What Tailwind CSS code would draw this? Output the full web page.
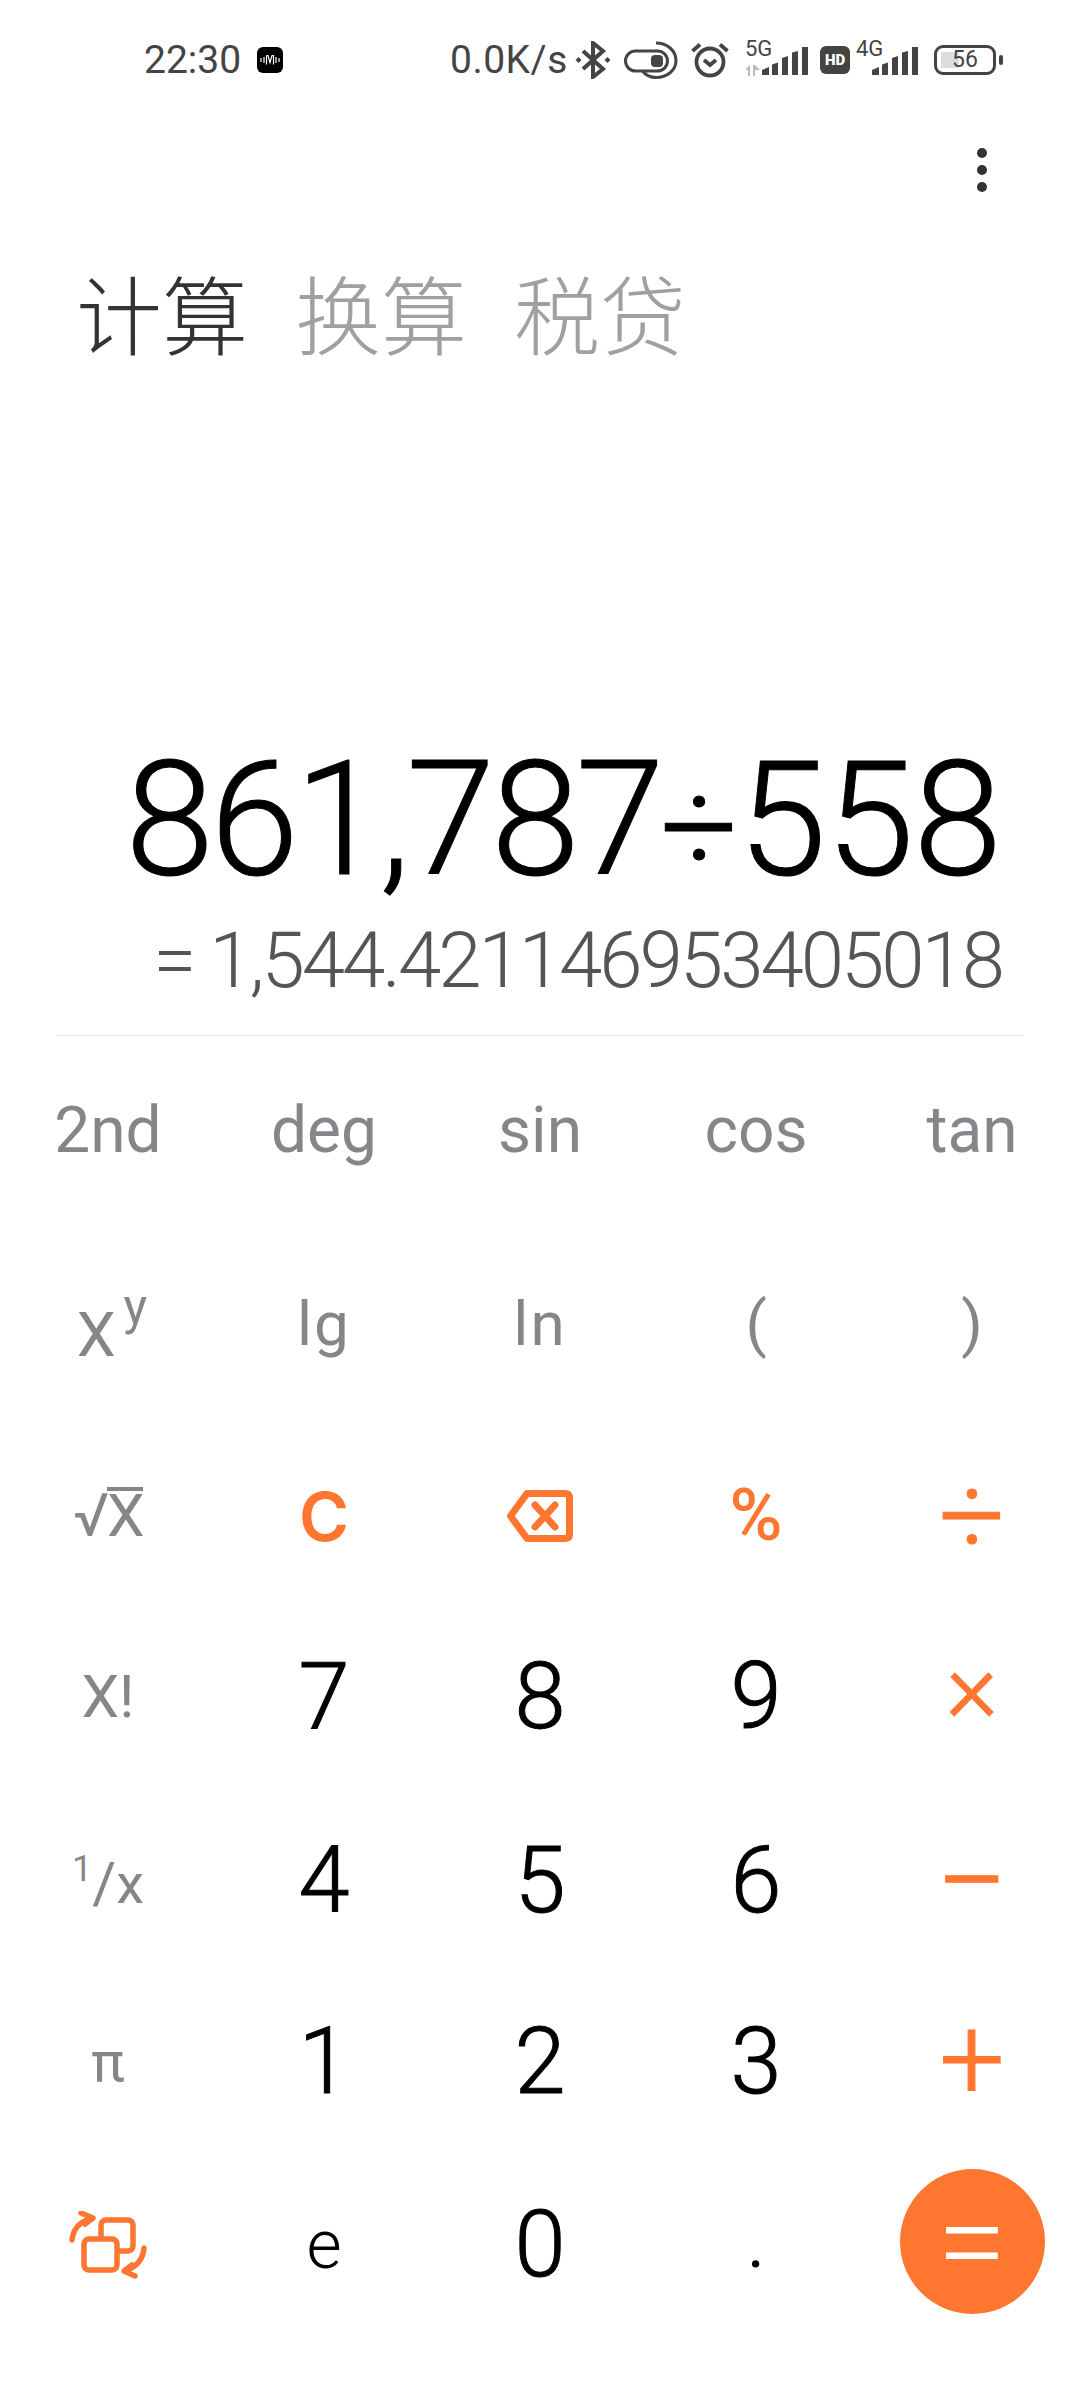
<!DOCTYPE html>
<html lang="zh-CN">
<head>
    <meta charset="UTF-8">
    <meta name="viewport" content="width=device-width, initial-scale=1.0">
    <title>计算器</title>
    <script src="https://cdn.jsdelivr.net/npm/@tailwindcss/browser@4"></script>
</head>
<body class="w-[1080px] h-[2400px] overflow-hidden bg-white font-['Roboto','Noto_Sans_CJK_SC',sans-serif]">
    <!-- status bar -->
    <div class="h-[120px] flex items-center pl-[144px] text-[#444444]">
        <span class="text-[39px] leading-none w-[113px]">22:30</span>
        <svg class="w-[26px] h-[26px]" viewBox="0 0 26 26">
            <rect width="26" height="26" rx="6" fill="#000"/>
            <path d="M4 11v4M7 10v6M9.500 8.500h1.500l2 7 2-7h1.500v9M9.500 8.500v9M19 10v6M22 11v4" stroke="#fff" stroke-width="1.200" fill="none"/>
        </svg>
        <span class="text-[39px] leading-none tracking-[0.5px] ml-[167px] w-[125px]">0.0K/s</span>
        <!-- bluetooth -->
        <svg class="w-[36px] h-[38px]" viewBox="0 0 36 38" fill="none" stroke="#444" stroke-width="4">
            <path d="M8 10l20 18-10 8V2l10 8L8 28"/>
            <path d="M3.500 16l3 3-3 3-3-3zM32.500 16l3 3-3 3-3-3z" fill="#444" stroke="none"/>
        </svg>
        <!-- toggle -->
        <svg class="w-[54px] h-[38px] ml-[13px]" viewBox="0 0 54 38" fill="none" stroke="#444" stroke-width="3">
            <rect x="1.500" y="10" width="42" height="20" rx="10"/>
            <rect x="27" y="14" width="12" height="12" rx="4" fill="#444" stroke="none"/>
            <path d="M32 2c11 0 20 7.500 20 17.500S43 36.500 32 36.500c-6 0-10-2-13-6"/>
        </svg>
        <!-- alarm -->
        <svg class="w-[38px] h-[36px] ml-[13px]" viewBox="0 0 38 36" fill="none" stroke="#444" stroke-width="3.800">
            <circle cx="19" cy="20" r="13.500"/>
            <path d="M13 18l6 5 6-5M1.500 9L9 2.500M36.500 9L29 2.500"/>
        </svg>
        <!-- 5G signal -->
        <div class="relative w-[63px] h-[38px] ml-[16px]">
            <span class="absolute left-0 top-[-4px] text-[22px] leading-[24px]">5G</span>
            <svg class="absolute left-0 top-[5px] w-[65px] h-[30px]" viewBox="0 0 65 30">
                <path d="M0 24l5-5v11H3v-6zM8 19h2l5 5h-5v6H8z" fill="#bbb"/>
                <path d="M18 24l7-3v8h-7zM28 18.500l6-2V29h-6zM38 12l6-2v19h-6zM48 6.500l6-1.500V29h-6zM58 1h6v28h-6z" fill="#444" transform="translate(-1 0)"/>
            </svg>
        </div>
        <!-- HD -->
        <div class="ml-[12px] w-[30px] h-[28px] rounded-[6px] bg-[#444444] text-white text-[15px] font-black leading-[28px] text-center">HD</div>
        <!-- 4G signal -->
        <div class="relative w-[64px] h-[38px] ml-[6px]">
            <span class="absolute left-0 top-[-4px] text-[22px] leading-[24px]">4G</span>
            <svg class="absolute left-[16px] top-[5px] w-[48px] h-[30px]" viewBox="0 0 48 30">
                <path d="M0 24l7-3v8H0zM10 18.500l6-2V29h-6zM20 12l6-2v19h-6zM30 6.500l6-1.500V29h-6zM40 1h6v28h-6z" fill="#444"/>
            </svg>
        </div>
        <!-- battery -->
        <div class="relative ml-[14px] w-[62px] h-[30px] rounded-[9px] border-[3px] border-[#444444]">
            <div class="absolute left-[4px] top-[4px] w-[18px] h-[16px] bg-[#dddddd]"></div>
            <span class="absolute inset-0 text-center text-[23px] leading-[24px]">56</span>
        </div>
        <div class="ml-[3px] w-[4px] h-[10px] rounded-[2px] bg-[#444444]"></div>
    </div>

    <!-- overflow menu -->
    <div class="h-[100px] flex justify-end pr-[93px] pt-[28px]">
        <div class="flex flex-col gap-[7px]">
            <div class="w-[10px] h-[10px] rounded-full bg-[#333333]"></div>
            <div class="w-[10px] h-[10px] rounded-full bg-[#333333]"></div>
            <div class="w-[10px] h-[10px] rounded-full bg-[#333333]"></div>
        </div>
    </div>

    <!-- tabs -->
    <div class="h-[184px] flex items-center pl-[76px] gap-[47px] text-[86px] leading-none font-light font-['Noto_Sans_CJK_SC',sans-serif]">
        <span class="text-[#333333]">计算</span>
        <span class="text-[#a0a0a0]">换算</span>
        <span class="text-[#a0a0a0]">税贷</span>
    </div>

    <!-- display -->
    <div class="h-[514px] flex items-end justify-end pr-[79px] text-[160px] leading-[180px] text-black font-light [-webkit-text-stroke:1px_black]"><span><span class="tracking-[-4px]">861,787</span><span class="text-[136px]">÷</span><span class="tracking-[-1px]">558</span></span></div>
    <div class="h-[103px] -mt-[9px] flex items-center justify-end pr-[78px] text-[78px] leading-none tracking-[-3px] text-[#555555] font-light">= 1,544.421146953405018</div>
    <div class="mx-[57px] mt-[23px] h-[1px] bg-[#e2e2e2]"></div>

    <!-- keypad -->
    <div class="grid grid-cols-5 grid-rows-[190px_196px_188px_174px_194px_168px_198px] text-center items-center leading-none">
        <div class="text-[64px] text-[#85868a]">2nd</div>
        <div class="text-[64px] text-[#85868a]">deg</div>
        <div class="text-[64px] text-[#85868a]">sin</div>
        <div class="text-[64px] text-[#85868a]">cos</div>
        <div class="text-[64px] text-[#85868a]">tan</div>

        <div class="text-[62px] text-[#85868a] pl-[8px]">X<span class="text-[50px] align-[32px] ml-[8px]">y</span></div>
        <div class="text-[62px] text-[#85868a] tracking-[2px]">lg</div>
        <div class="text-[62px] text-[#85868a] tracking-[2px]">ln</div>
        <div class="text-[62px] text-[#85868a]">(</div>
        <div class="text-[62px] text-[#85868a]">)</div>

        <div class="text-[60px] text-[#85868a] tracking-[-2px]">√<span class="inline-block h-[54px] leading-[50px] border-t-[4px] border-[#85868a]">X</span></div>
        <div class="text-[68px] font-semibold font-['Inter',sans-serif] text-[#ff7631]">C</div>
        <div class="flex justify-center">
            <svg class="w-[66px] h-[52px]" viewBox="0 0 66 52" fill="none" stroke="#ff7631" stroke-width="7" stroke-linejoin="round" stroke-linecap="round">
                <path d="M20 3.500h38q4.500 0 4.500 4.500v36q0 4.500-4.500 4.500H20L3.500 26z"/>
                <path d="M28 15l20 22M48 15L28 37"/>
            </svg>
        </div>
        <div class="text-[72px] font-medium text-[#ff7631]">%</div>
        <div class="text-[116px] font-light text-[#ff7631] [-webkit-text-stroke:1px_#ff7631]">÷</div>

        <div class="text-[60px] text-[#85868a]">X!</div>
        <div class="text-[92px] font-light text-black [-webkit-text-stroke:1px_black]">7</div>
        <div class="text-[92px] font-light text-black [-webkit-text-stroke:1px_black]">8</div>
        <div class="text-[92px] font-light text-black [-webkit-text-stroke:1px_black]">9</div>
        <div class="text-[100px] font-light text-[#ff7631] pb-[20px] [-webkit-text-stroke:1px_#ff7631]">×</div>

        <div class="text-[56px] text-[#85868a]"><span class="text-[36px] align-[22px]">1</span><span class="text-[58px]">/</span><span>x</span></div>
        <div class="text-[92px] font-light text-black [-webkit-text-stroke:1px_black]">4</div>
        <div class="text-[92px] font-light text-black [-webkit-text-stroke:1px_black]">5</div>
        <div class="text-[92px] font-light text-black [-webkit-text-stroke:1px_black]">6</div>
        <div class="text-[128px] font-light text-[#ff7631] [-webkit-text-stroke:1px_#ff7631]">−</div>

        <div class="text-[56px] text-[#85868a]">π</div>
        <div class="text-[92px] font-light text-black [-webkit-text-stroke:1px_black]">1</div>
        <div class="text-[92px] font-light text-black [-webkit-text-stroke:1px_black]">2</div>
        <div class="text-[92px] font-light text-black [-webkit-text-stroke:1px_black]">3</div>
        <div class="text-[116px] font-light text-[#ff7631] pb-[6px] [-webkit-text-stroke:1px_#ff7631]">+</div>

        <div class="flex justify-center">
            <svg class="w-[78px] h-[68px]" viewBox="0 0 78 68" fill="none" stroke="#ff7631" stroke-width="5.500" stroke-linecap="round" stroke-linejoin="round">
                <rect x="32" y="9" width="32" height="31" rx="5"/>
                <rect x="15" y="28" width="33" height="31" rx="5" fill="#fff"/>
                <path d="M3 29c1-10 6-17 17-21M12 2l12 5-8 6"/>
                <path d="M75 37c-1 11-6 18-17 22M66 65l-11-5 8-6"/>
            </svg>
        </div>
        <div class="text-[68px] font-light text-black">e</div>
        <div class="text-[92px] font-light text-black [-webkit-text-stroke:1px_black]">0</div>
        <div class="text-[66px] text-black">.</div>
        <div class="flex justify-center">
            <div class="w-[145px] h-[145px] -mt-[8px] rounded-full bg-[#ff7631] flex items-center justify-center text-white text-[127px] font-light leading-none">=</div>
        </div>
    </div>
</body>
</html>
